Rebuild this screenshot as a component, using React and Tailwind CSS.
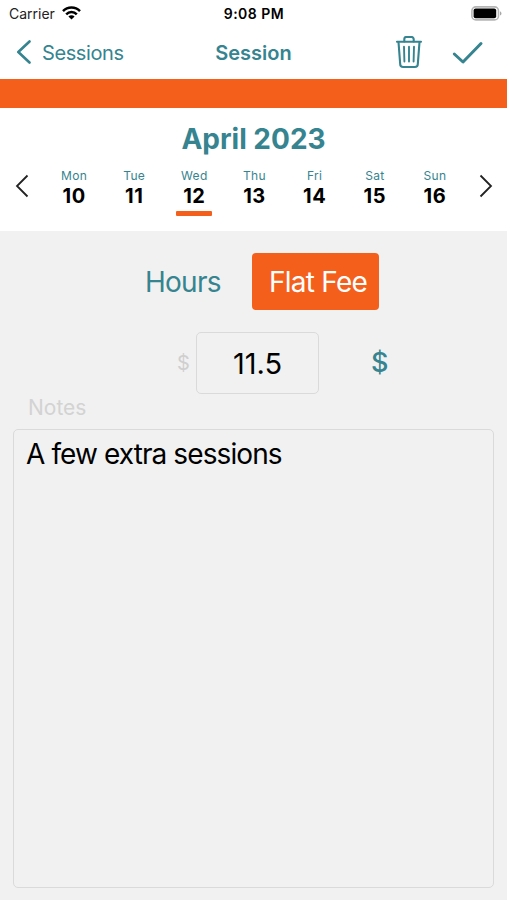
import { useState } from 'react';

const DAYS = [
  { name: 'Mon', date: 10 },
  { name: 'Tue', date: 11 },
  { name: 'Wed', date: 12 },
  { name: 'Thu', date: 13 },
  { name: 'Fri', date: 14 },
  { name: 'Sat', date: 15 },
  { name: 'Sun', date: 16 },
];

function WifiIcon() {
  return (
    <svg className="mb-0.5" width="19" height="14" viewBox="0 0 19 14" fill="none" stroke="#000" strokeWidth="2.5">
      <path d="M1 5.1a12 12 0 0 1 17 0" />
      <path d="M4.2 8.3a7.4 7.4 0 0 1 10.6 0" />
      <path d="M9.5 13.4 6.4 10.5a4.4 4.4 0 0 1 6.2 0Z" fill="#000" stroke="none" />
    </svg>
  );
}

function BatteryIcon() {
  return (
    <svg width="31" height="15" viewBox="0 0 31 15" fill="none">
      <rect x="0.9" y="0.9" width="26.6" height="13" rx="4" stroke="#b5b5b5" strokeWidth="1.6" />
      <rect x="2.6" y="2.6" width="22.6" height="9.6" rx="2" fill="#000" />
      <path d="M29 5.2c2 .8 2 3.6 0 4.4Z" fill="#a8a8a8" />
    </svg>
  );
}

function TrashIcon() {
  return (
    <svg width="28" height="34" viewBox="0 0 28 34" fill="none" stroke="#35848f" strokeWidth="2.1" strokeLinecap="round" strokeLinejoin="round">
      <path d="M2 5.7h24" />
      <path d="M9.3 5.5V3.2A2.2 2.2 0 0 1 11.5 1h5a2.2 2.2 0 0 1 2.2 2.2v2.3" />
      <path d="M3.5 6l1.7 22.2A2.9 2.9 0 0 0 8.1 31h11.8a2.9 2.9 0 0 0 2.9-2.8L24.5 6" />
      <path d="M9 10.7l.4 14.8M14 10.7v14.8M19 10.7l-.4 14.8" strokeWidth="1.9" />
    </svg>
  );
}

export default function App() {
  const [selected, setSelected] = useState(12);
  const [notes, setNotes] = useState('A few extra sessions');
  const [amount, setAmount] = useState('11.5');

  return (
    <div className="flex h-[900px] w-[507px] flex-col overflow-hidden bg-[#f1f1f1] font-[Inter,sans-serif] text-black">
      {/* Status bar */}
      <div className="grid h-[27px] grid-cols-3 items-center bg-white pr-[5px] pl-[9px] text-[14px]">
        <div className="flex items-center gap-[7px] text-[#222]">
          <span>Carrier</span>
          <WifiIcon />
        </div>
        <span className="pr-[3px] text-center font-semibold tracking-[0.5px]">9:08 PM</span>
        <div className="flex justify-end">
          <BatteryIcon />
        </div>
      </div>

      {/* Navigation bar */}
      <header className="grid h-[52px] grid-cols-3 items-center bg-white pr-[23px] pl-[16px] text-[#35848f]">
        <button className="flex items-center gap-[9px] text-[20px] tracking-[-0.4px]">
          <svg width="17" height="26" viewBox="0 0 17 26" fill="none" stroke="currentColor" strokeWidth="2.6" strokeLinecap="round" strokeLinejoin="round">
            <path d="M13.5 1.5 2.3 12 13.5 22.5" />
          </svg>
          Sessions
        </button>
        <h1 className="pl-[7px] text-center text-[20px] font-semibold">Session</h1>
        <div className="flex items-center justify-end gap-[29px]">
          <button aria-label="Delete"><TrashIcon /></button>
          <button aria-label="Save">
            <svg width="32" height="24" viewBox="0 0 32 24" fill="none" stroke="currentColor" strokeWidth="3" strokeLinecap="round" strokeLinejoin="round">
              <path d="M2.3 13l8.7 8L29 2.5" />
            </svg>
          </button>
        </div>
      </header>

      <div className="h-[29px] bg-[#f4601c]" />

      {/* Week picker */}
      <section className="h-[123px] bg-white pt-[14px]">
        <h2 className="text-center text-[28px] leading-[35px] font-bold text-[#35848f]">April 2023</h2>
        <div className="-mt-px flex items-center px-[14px]">
          <button aria-label="Previous week">
            <svg width="16" height="24" viewBox="0 0 16 24" fill="none" stroke="#222" strokeWidth="1.8">
              <path d="M13.5 1.5 3 12l10.5 10.5" />
            </svg>
          </button>
          <div className="grid flex-1 grid-cols-7 pt-[13px] pr-3 pl-[14px]">
            {DAYS.map((day) => (
              <button key={day.date} onClick={() => setSelected(day.date)} className="flex flex-col items-center">
                <span className="text-[12px] leading-[14px] tracking-wide text-[#35848f]">{day.name}</span>
                <span className="text-[20px] leading-[26px] font-bold tracking-[0.5px]">{day.date}</span>
                <span className={`mt-[2px] h-[5px] w-9 rounded-[1px] ${selected === day.date ? 'bg-[#f4601c]' : ''}`} />
              </button>
            ))}
          </div>
          <button aria-label="Next week">
            <svg width="16" height="24" viewBox="0 0 16 24" fill="none" stroke="#222" strokeWidth="1.8">
              <path d="M3.5 1.5 14 12 3.5 22.5" />
            </svg>
          </button>
        </div>
      </section>

      {/* Fee type */}
      <div className="mt-[22px] flex h-[57px] items-center pl-[145px] text-[28px] tracking-[-0.75px]">
        <button className="w-[107px] text-left text-[#35848f]">Hours</button>
        <button className="h-[57px] w-[127px] rounded-[4px] bg-[#f4601c] pl-[5px] text-white">Flat Fee</button>
      </div>

      {/* Amount */}
      <div className="mt-[22px] flex h-[62px] items-center pl-[177px]">
        <span className="w-[19px] text-[20px] text-[#cfcfcf]">$</span>
        <input
          value={amount}
          onChange={(e) => setAmount(e.target.value)}
          className="h-[62px] w-[123px] rounded-[5px] border-[1.5px] border-[#dadada] text-center text-[29px] outline-none"
        />
        <span className="ml-[52px] text-[27px] font-medium text-[#35848f]">$</span>
      </div>

      {/* Notes */}
      <label className="mt-[1px] h-[34px] pl-[28px] text-[21px] leading-[26px] text-[#d3d3d3]">Notes</label>
      <textarea
        value={notes}
        onChange={(e) => setNotes(e.target.value)}
        className="mx-[13px] h-[459px] resize-none rounded-[5px] border-[1.5px] border-[#dadada] px-3 pt-[6px] text-[28px] leading-9 tracking-[-0.9px] outline-none"
      />
    </div>
  );
}
